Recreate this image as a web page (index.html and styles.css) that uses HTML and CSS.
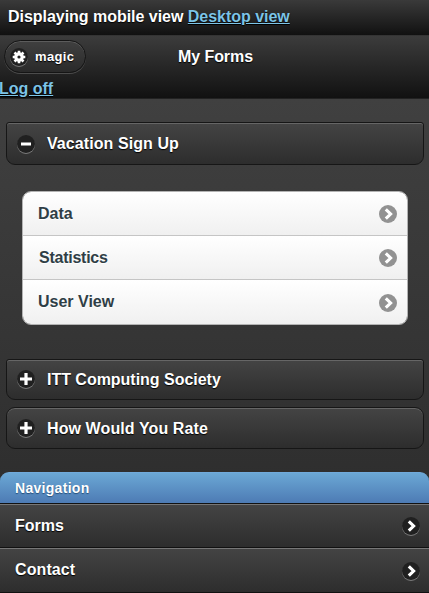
FILE: index.html
```
<!DOCTYPE html>
<html lang="en">
<head>
<meta charset="utf-8">
<title>My Forms</title>
<link rel="stylesheet" href="styles.css">
</head>
<body>
<svg class="defs" width="0" height="0" aria-hidden="true">
  <symbol id="arrow" viewBox="0 0 18 18"><path d="M6.8 4.4L11.6 9l-4.8 4.6" fill="none" stroke="#fff" stroke-width="3.1"/></symbol>
  <symbol id="plus" viewBox="0 0 18 18"><path d="M9 3v12M3 9h12" stroke="#fff" stroke-width="3.2"/></symbol>
  <symbol id="minus" viewBox="0 0 18 18"><path d="M4 9h10" stroke="#fff" stroke-width="3.2"/></symbol>
  <symbol id="gear" viewBox="0 0 18 18"><circle cx="9" cy="9" r="3.2" fill="none" stroke="#fff" stroke-width="3.2"/><path d="M9 2.7v12.6M2.7 9h12.6M4.5 4.5l9 9M4.5 13.5l9-9" stroke="#fff" stroke-width="2.6"/><circle cx="9" cy="9" r="1.6" fill="#222"/></symbol>
</svg>
<div class="switcher">Displaying mobile view <a href="#">Desktop view</a></div>
<header class="header">
  <div class="header-row">
    <a class="user" href="#"><svg class="icon"><use href="#gear"/></svg>magic</a>
    <h1>My Forms</h1>
  </div>
  <a class="logoff" href="#">Log off</a>
</header>
<main class="content">
  <h2 class="fold open"><svg class="icon"><use href="#minus"/></svg><span>Vacation Sign Up</span></h2>
  <ul class="list">
    <li><span>Data</span><svg class="icon"><use href="#arrow"/></svg></li>
    <li><span class="stat">Statistics</span><svg class="icon"><use href="#arrow"/></svg></li>
    <li><span>User View</span><svg class="icon"><use href="#arrow"/></svg></li>
  </ul>
  <h2 class="fold itt"><svg class="icon"><use href="#plus"/></svg><span>ITT Computing Society</span></h2>
  <h2 class="fold last"><svg class="icon"><use href="#plus"/></svg><span>How Would You Rate</span></h2>
  <nav class="nav">
    <div class="nav-title">Navigation</div>
    <a href="#"><span>Forms</span><svg class="icon"><use href="#arrow"/></svg></a>
    <a href="#"><span>Contact</span><svg class="icon"><use href="#arrow"/></svg></a>
  </nav>
</main>
</body>
</html>
```

FILE: styles.css
```
* { box-sizing: border-box; }
body {
  margin: 0;
  height: 593px;
  overflow: hidden;
  display: flex;
  flex-direction: column;
  font: bold 16px/20px "Liberation Sans", Arial, sans-serif;
  color: #fff;
  text-shadow: 0 1px 1px #000;
  background: #2c2c2c;
}
.defs { position: absolute; }
a { color: #7cc4e7; }
h1, h2 { margin: 0; font-size: 16px; }
.icon {
  width: 18px;
  height: 18px;
  flex: none;
  border-radius: 50%;
  background: #202020;
  box-shadow: 0 1px 0 rgba(255, 255, 255, .35);
}
.switcher {
  height: 35px;
  padding: 7px 8px;
  background: linear-gradient(#3a3a3a, #111);
  letter-spacing: -.03px;
  white-space: nowrap;
}
.header {
  height: 64px;
  border-top: 1px solid #343434;
  border-bottom: 1px solid #222;
  background: linear-gradient(#3c3c3c, #111);
}
.header-row {
  display: grid;
  grid-template-columns: 86px 1fr 84px;
  height: 43px;
  padding-top: 4px;
}
.header-row h1 { text-align: center; padding-top: 7px; letter-spacing: -.08px; }
.user {
  display: flex;
  align-items: center;
  gap: 7px;
  width: 82px;
  height: 33px;
  margin-left: 4px;
  padding-left: 5px;
  border: 1px solid #151515;
  border-radius: 17px;
  background: linear-gradient(#404040, #2a2a2a);
  box-shadow: inset 0 1px 0 #5c5c5c, 0 1px 0 #4c4c4c;
  color: #fff;
  font-size: 13px;
  letter-spacing: .35px;
  line-height: 20px;
  text-decoration: none;
}
.logoff { display: block; width: max-content; margin-left: -1px; }
.content {
  flex: 1;
  padding-top: 23px;
  background: linear-gradient(#404040, #292929);
}
.fold {
  display: flex;
  align-items: center;
  gap: 12px;
  height: 43px;
  margin: 0 5px 0 6px;
  padding-left: 10px;
  border: 1px solid #161616;
  border-radius: 9px;
  background: linear-gradient(#444, #2d2d2d);
  box-shadow: inset 0 1px 0 #666;
  letter-spacing: .08px;
}
.open, .itt { border-top-left-radius: 3px; border-top-right-radius: 3px; }
.itt { height: 41px; margin-bottom: 7px; letter-spacing: -.02px; }
.itt .icon { margin-top: -2px; }
.last { height: 42px; letter-spacing: .1px; }
.last span { padding-top: 1px; }
.list {
  list-style: none;
  margin: 26px 21px 34px 22px;
  padding: 0;
  border: 1px solid #b3b3b3;
  border-radius: 9px;
  overflow: hidden;
  color: #2f3e46;
  text-shadow: 0 1px 0 #fff;
}
.list li {
  display: flex;
  justify-content: space-between;
  align-items: center;
  height: 44px;
  padding: 0 10px 0 15px;
  border-bottom: 1px solid #c5c5c5;
  background: linear-gradient(#fff, #f0f0f0);
}
.list li:last-child { border: 0; }
.list .stat { padding-left: 1px; letter-spacing: -.25px; }
.list .icon { background: #929292; box-shadow: none; }
.list li:last-child .icon { margin-top: 2px; }
.nav { margin-top: 23px; }
.nav-title {
  height: 31px;
  padding: 5px 15px;
  border-top: 1px solid #71aadb;
  border-radius: 9px 9px 0 0;
  background: linear-gradient(#6ba8d5, #4d7bb4);
  font-size: 14px;
  letter-spacing: .3px;
  text-shadow: 0 1px 1px #254f7a;
}
.nav a {
  display: flex;
  justify-content: space-between;
  height: 44px;
  padding: 12px 9px 0 15px;
  border-top: 1px solid #111;
  background: linear-gradient(#444, #2d2d2d);
  box-shadow: inset 0 1px 0 #777;
  color: #fff;
  text-decoration: none;
}
.nav a:last-child { height: 46px; border-bottom: 1px solid #111; letter-spacing: .1px; }
.nav .icon { margin-top: 1px; }
.nav a:last-child .icon { margin-top: 2px; }
```
